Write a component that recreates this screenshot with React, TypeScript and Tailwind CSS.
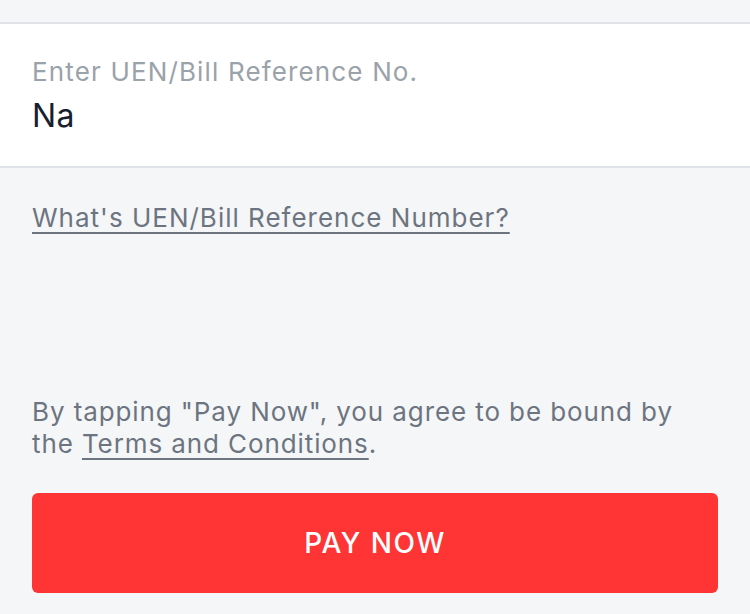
import React from "react";

const App: React.FC = () => {
  return (
    <div
      className="min-h-screen bg-[#f5f6f8] pt-[22px]"
      style={{ fontFamily: "Inter, 'Noto Sans', sans-serif" }}
    >
      {/* Input panel */}
      <div className="bg-white border-y-2 border-[#dfe3e8] px-[32px] pt-[32px] pb-[30px]">
        <label className="block text-[26px] leading-[32px] tracking-[1.15px] text-[#9aa2aa]">
          Enter UEN/Bill Reference No.
        </label>
        <div className="mt-[8px] text-[32px] leading-[40px] tracking-[0.5px] text-[#17212d]">Na</div>
      </div>

      {/* Help link */}
      <div className="px-[32px] mt-[34px]">
        <a className="text-[26px] leading-[32px] tracking-[1px] text-[#6c757f] underline underline-offset-[5px] decoration-2">
          What's UEN/Bill Reference Number?
        </a>
      </div>

      {/* Terms + button */}
      <div className="px-[32px] mt-[162px]">
        <p className="text-[26px] leading-[32px] tracking-[0.9px] text-[#6c757f]">
          By tapping "Pay Now", you agree to be bound by the{" "}
          <a className="underline underline-offset-[5px] decoration-2">Terms and Conditions</a>.
        </p>
        <button className="mt-[33px] w-full h-[100px] rounded-[6px] bg-[#ff3434] text-white text-[28px] tracking-[1.5px] font-medium">
          PAY NOW
        </button>
      </div>
    </div>
  );
};

export default App;
